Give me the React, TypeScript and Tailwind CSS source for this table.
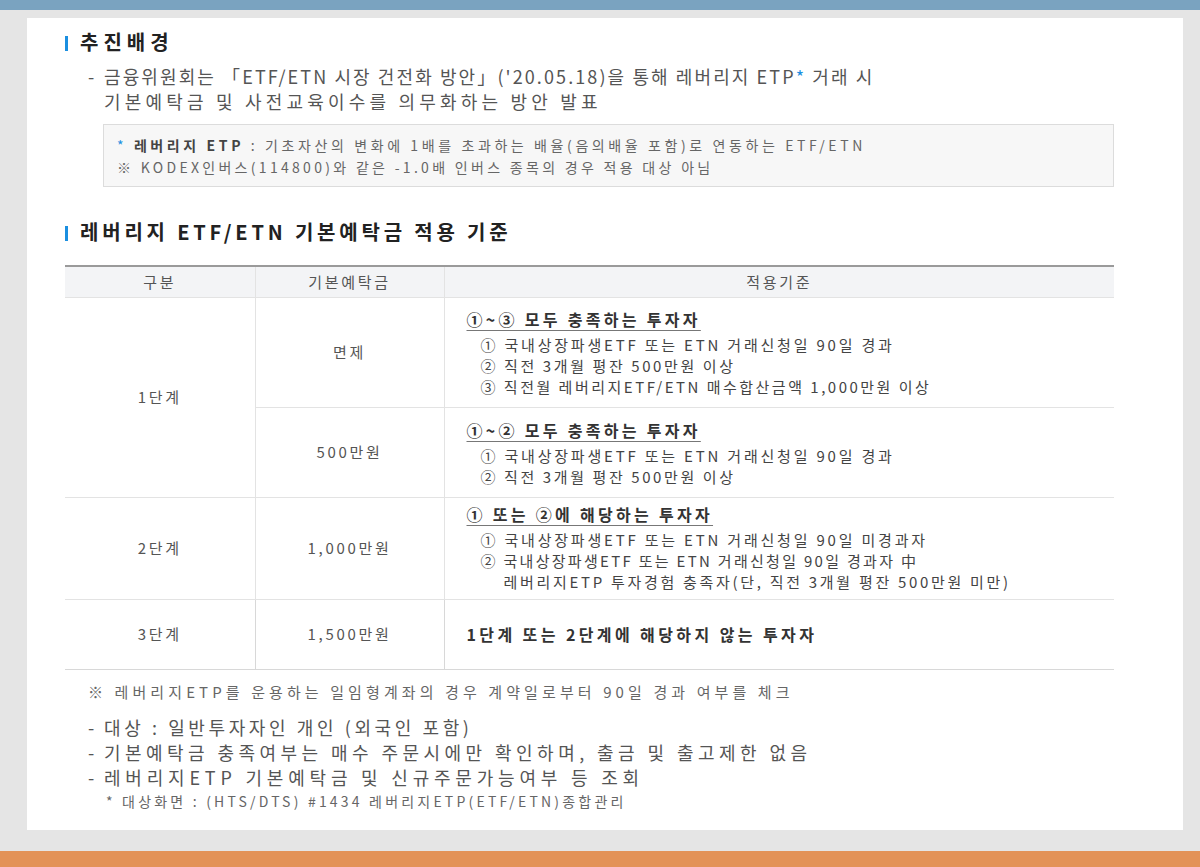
import React from "react";

const font = { fontFamily: '"Noto Sans CJK KR", "Noto Sans", sans-serif' };

function Heading({ children, tr }: { children: React.ReactNode; tr: string }) {
  return (
    <div className="flex items-center h-[26px]">
      <span className="w-[3px] h-[15px] bg-[#1b8fe0] mr-[12px] mt-[2px]" />
      <span className={`text-[20px] font-bold text-[#222] leading-[26px] ${tr}`}>{children}</span>
    </div>
  );
}

function Title({ children, tr }: { children: React.ReactNode; tr: string }) {
  return (
    <div className={`text-[16px] leading-[21px] text-[#333] font-semibold underline underline-offset-[4px] decoration-[#777] mb-[4px] ${tr}`}>
      {children}
    </div>
  );
}

function Item({ children, tr }: { children: React.ReactNode; tr: string }) {
  return <div className={`pl-[14px] text-[15px] leading-[21px] text-[#444] whitespace-nowrap ${tr}`}>{children}</div>;
}

function Dash({ children, tr }: { children: React.ReactNode; tr: string }) {
  return (
    <div className="flex">
      <span className="w-[39px] pl-[23px]">-</span>
      <span className={`whitespace-nowrap ${tr}`}>{children}</span>
    </div>
  );
}

export default function App() {
  return (
    <div style={font} className="w-[1200px] h-[867px] bg-[#e5e5e5] flex flex-col overflow-hidden">
      <div className="h-[10px] bg-[#7aa3c0] shrink-0" />
      <div className="h-[841px] pt-[8px] pl-[27px] shrink-0">
        <div className="w-[1156px] h-[812px] bg-white pl-[38px] pt-[11px]">
          <Heading tr="tracking-[5px]">추진배경</Heading>
          <div className="mt-[9px] text-[18px] leading-[25px] text-[#555]">
            <div className="flex">
              <span className="w-[39px] pl-[23px]">-</span>
              <span className="flex flex-col whitespace-nowrap">
                <span className="tracking-[2.1px]">
                  금융위원회는 「ETF/ETN 시장 건전화 방안」('20.05.18)을 통해 레버리지 ETP<span className="text-[#1b8fe0]">*</span> 거래 시
                </span>
                <span className="tracking-[4.2px]">기본예탁금 및 사전교육이수를 의무화하는 방안 발표</span>
              </span>
            </div>
          </div>
          <div className="mt-[10px] ml-[38px] w-[1011px] h-[63px] bg-[#f7f7f7] border border-[#dcdcdc] pl-[13px] pt-[9px] text-[14px] leading-[22px] text-[#666] whitespace-nowrap">
            <div className="tracking-[3.6px]">
              <span className="text-[#1b8fe0]">*</span>{" "}
              <span className="font-bold text-[#444]">레버리지 ETP</span> : 기초자산의 변화에 1배를 초과하는 배율(음의배율 포함)로 연동하는 ETF/ETN
            </div>
            <div className="tracking-[3.3px]">※ KODEX인버스(114800)와 같은 -1.0배 인버스 종목의 경우 적용 대상 아님</div>
          </div>

          <div className="mt-[32px]">
            <Heading tr="tracking-[3.8px]">레버리지 ETF/ETN 기본예탁금 적용 기준</Heading>
          </div>

          <table className="mt-[20px] w-[1049px] border-collapse table-fixed text-[15px] text-[#555] tracking-[2.7px]">
            <colgroup>
              <col className="w-[190px]" />
              <col className="w-[189px]" />
              <col className="w-[670px]" />
            </colgroup>
            <thead>
              <tr className="h-[31px] bg-[#f3f4f6] border-t-2 border-[#9a9a9a]">
                <th className="font-normal text-center border-b border-[#e3e3e3]">구분</th>
                <th className="font-normal text-center border-b border-l border-[#e3e3e3]">기본예탁금</th>
                <th className="font-normal text-center border-b border-l border-[#e3e3e3]">적용기준</th>
              </tr>
            </thead>
            <tbody>
              <tr className="h-[110px]">
                <td rowSpan={2} className="text-center border-b border-[#e3e3e3]">1단계</td>
                <td className="text-center border-b border-l border-[#e3e3e3]">면제</td>
                <td className="border-b border-l border-[#e3e3e3] pl-[22px] pt-[1px] align-middle">
                  <Title tr="tracking-[3.3px]">①~③ 모두 충족하는 투자자</Title>
                  <Item tr="tracking-[2.8px]">① 국내상장파생ETF 또는 ETN 거래신청일 90일 경과</Item>
                  <Item tr="tracking-[2.6px]">② 직전 3개월 평잔 500만원 이상</Item>
                  <Item tr="tracking-[2.5px]">③ 직전월 레버리지ETF/ETN 매수합산금액 1,000만원 이상</Item>
                </td>
              </tr>
              <tr className="h-[90px]">
                <td className="text-center border-b border-l border-[#e3e3e3]">500만원</td>
                <td className="border-b border-l border-[#e3e3e3] pl-[22px] pt-[2px] align-middle">
                  <Title tr="tracking-[3.3px]">①~② 모두 충족하는 투자자</Title>
                  <Item tr="tracking-[2.8px]">① 국내상장파생ETF 또는 ETN 거래신청일 90일 경과</Item>
                  <Item tr="tracking-[2.6px]">② 직전 3개월 평잔 500만원 이상</Item>
                </td>
              </tr>
              <tr className="h-[102px]">
                <td className="text-center border-b border-[#e3e3e3]">2단계</td>
                <td className="text-center border-b border-l border-[#e3e3e3]">1,000만원</td>
                <td className="border-b border-l border-[#e3e3e3] pl-[22px] align-middle">
                  <Title tr="tracking-[3.3px]">① 또는 ②에 해당하는 투자자</Title>
                  <Item tr="tracking-[2.8px]">① 국내상장파생ETF 또는 ETN 거래신청일 90일 미경과자</Item>
                  <Item tr="tracking-[2.3px]">② 국내상장파생ETF 또는 ETN 거래신청일 90일 경과자 中</Item>
                  <Item tr="tracking-[2.7px]">
                    <span className="pl-[23px]">레버리지ETP 투자경험 충족자(단, 직전 3개월 평잔 500만원 미만)</span>
                  </Item>
                </td>
              </tr>
              <tr className="h-[70px]">
                <td className="text-center border-b border-[#d8d8d8]">3단계</td>
                <td className="text-center border-b border-l border-[#d8d8d8]">1,500만원</td>
                <td className="border-b border-l border-[#d8d8d8] pl-[22px] align-middle">
                  <div className="text-[16px] font-semibold text-[#333] tracking-[3.4px]">1단계 또는 2단계에 해당하지 않는 투자자</div>
                </td>
              </tr>
            </tbody>
          </table>

          <div className="mt-[11px] pl-[23px] text-[15px] leading-[22px] text-[#666] tracking-[4.1px] whitespace-nowrap">
            ※ 레버리지ETP를 운용하는 일임형계좌의 경우 계약일로부터 90일 경과 여부를 체크
          </div>

          <div className="mt-[12px] text-[18px] leading-[25px] text-[#555]">
            <Dash tr="tracking-[3.6px]">대상 : 일반투자자인 개인 (외국인 포함)</Dash>
            <Dash tr="tracking-[4.45px]">기본예탁금 충족여부는 매수 주문시에만 확인하며, 출금 및 출고제한 없음</Dash>
            <Dash tr="tracking-[4.8px]">레버리지ETP 기본예탁금 및 신규주문가능여부 등 조회</Dash>
          </div>
          <div className="pl-[41px] text-[14px] leading-[23px] text-[#666] tracking-[3.2px] whitespace-nowrap">
            * 대상화면 : (HTS/DTS) #1434 레버리지ETP(ETF/ETN)종합관리
          </div>
        </div>
      </div>
      <div className="h-[16px] bg-[#e39257] shrink-0" />
    </div>
  );
}
